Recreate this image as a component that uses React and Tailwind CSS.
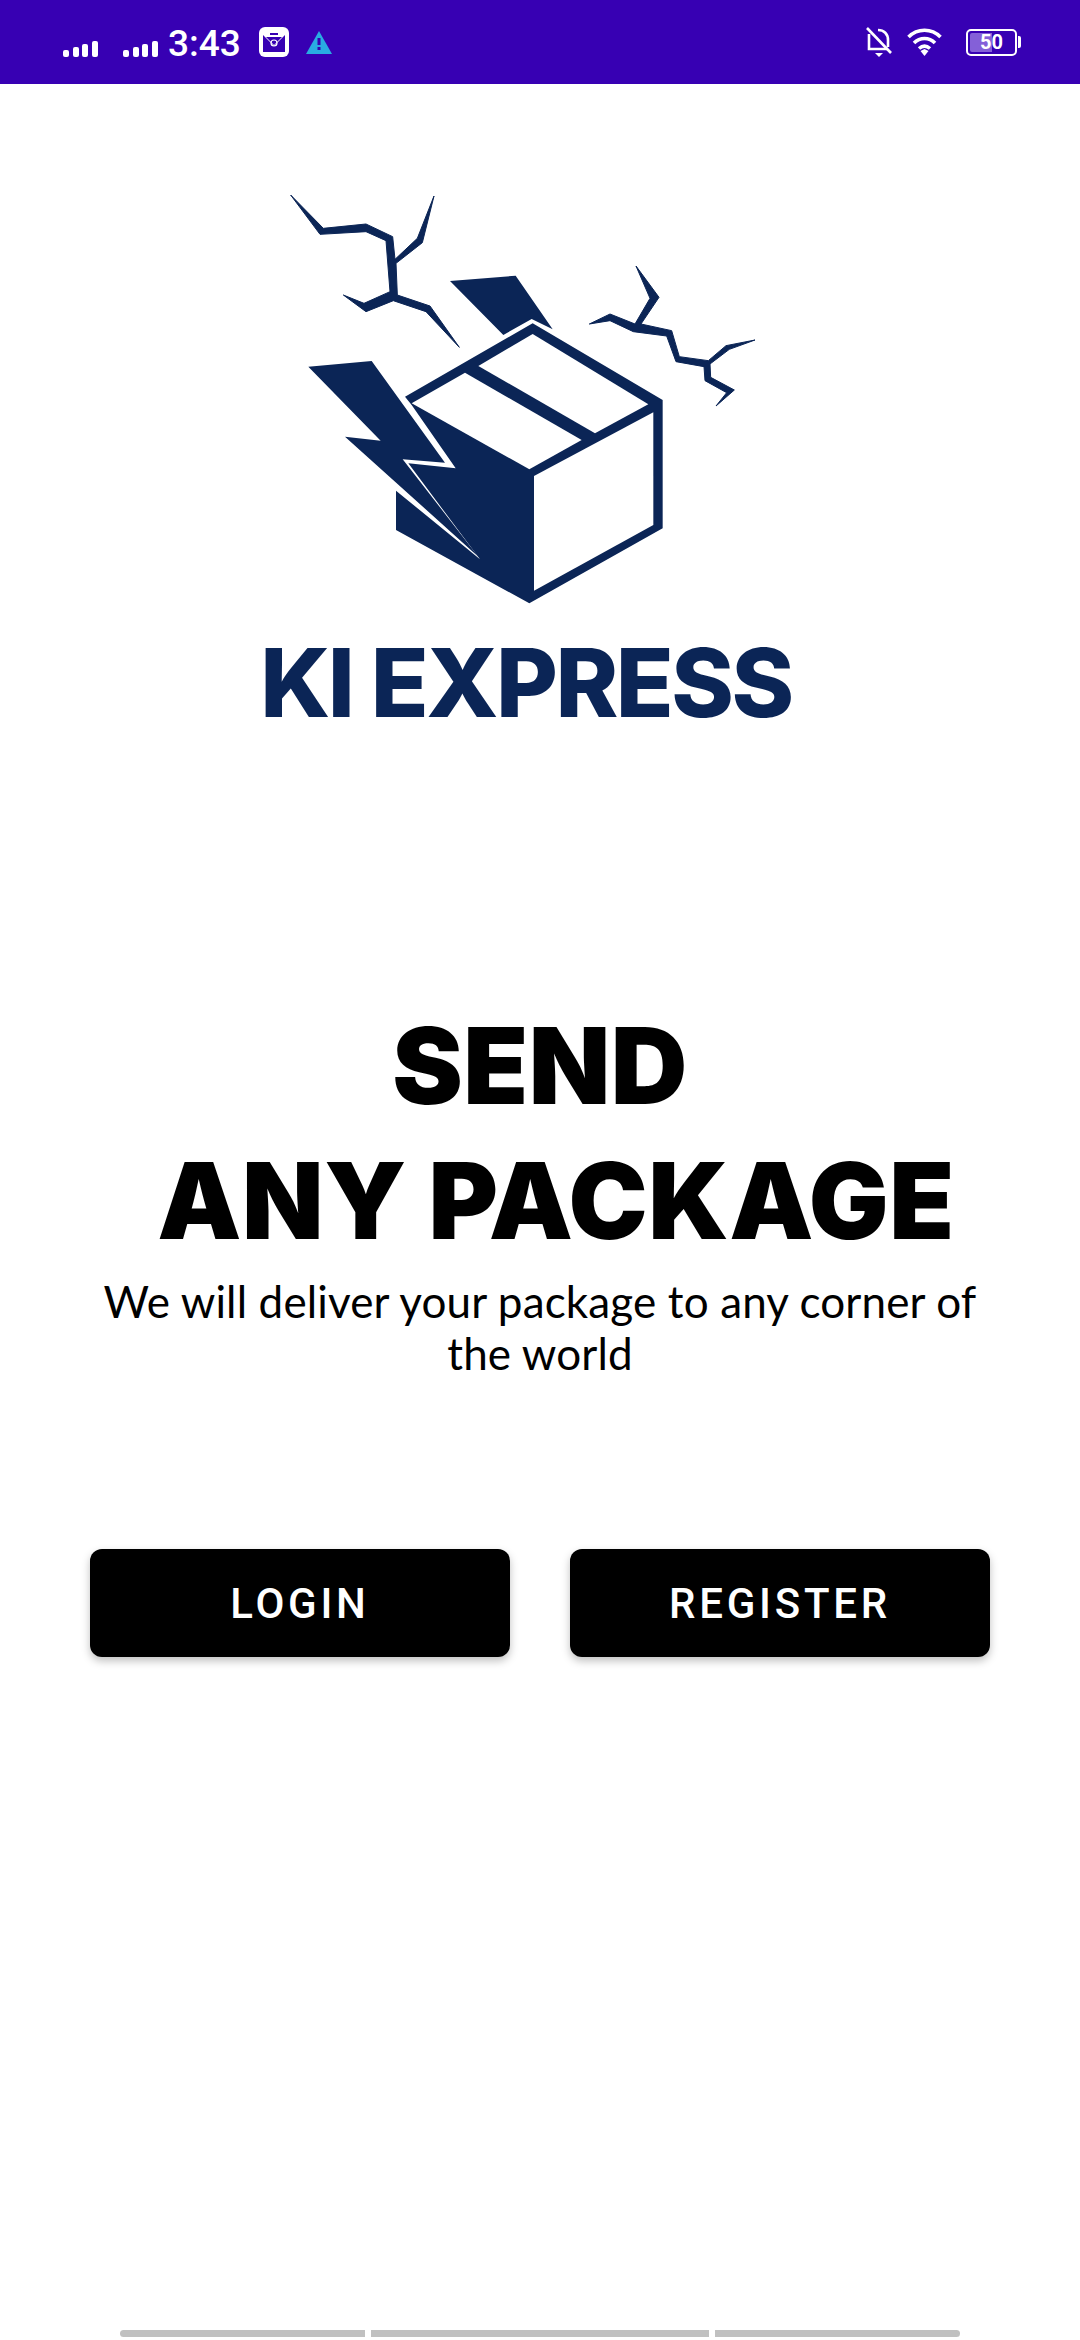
import React from "react";

const SignalBars = () => (
  <svg width="35" height="16" viewBox="0 0 35 16" fill="#fff">
    <rect x="0" y="9" width="6" height="7" rx="2" />
    <rect x="10" y="6" width="6" height="10" rx="2" />
    <rect x="19" y="3" width="6" height="13" rx="2" />
    <rect x="29" y="0" width="6" height="16" rx="2" />
  </svg>
);

const MailIcon = () => (
  <svg width="30" height="30" viewBox="0 0 30 30">
    <rect width="30" height="30" rx="6" fill="#fff" />
    <path d="M4 8h22v17H4z" fill="#3700b3" />
    <path d="M4 8h22l-11 11z" fill="#fff" />
    <path d="M7 10h16l-8 8z" fill="#3700b3" />
    <path d="M11 6h8v2h-8z" fill="#3700b3" />
    <circle cx="15" cy="16" r="3" fill="none" stroke="#fff" strokeWidth="1.2" />
  </svg>
);

const WarningIcon = () => (
  <svg width="26" height="23" viewBox="0 0 26 23">
    <path d="M13 0l13 23H0z" fill="#29abe2" />
    <rect x="11.5" y="7" width="3" height="7" fill="#3700b3" />
    <rect x="11.5" y="16" width="3" height="3" fill="#3700b3" />
  </svg>
);

const BellOffIcon = () => (
  <svg width="26" height="30" viewBox="0 0 26 30" fill="none" stroke="#fff" strokeWidth="2.6">
    <path d="M12 3c6 0 10 4 10 10v7" />
    <path d="M3 7v15h19" />
    <path d="M1 1l24 25" />
    <path d="M9 26h8l-4 4z" fill="#fff" stroke="none" />
  </svg>
);

const WifiIcon = () => (
  <svg width="35" height="28" viewBox="0 0 35 28" fill="none" stroke="#fff" strokeWidth="3.6">
    <path d="M1.5 9C10.500 0 24.500 0 33.500 9" />
    <path d="M7 15c6-6 15-6 21 0" />
    <path d="M12 20.500c3.500-3 7.500-3 11 0" />
    <path d="M13.500 23l4-2 4 2-4 5z" fill="#fff" stroke="none" />
  </svg>
);

const BatteryIcon = () => (
  <div className="flex items-center">
    <div className="relative h-[27px] w-[51px] rounded-[5px] border-[2px] border-white p-[2px]">
      <div className="h-full w-[22px] rounded-l-[2px] bg-[#8460d8]" />
      <span className="absolute inset-0 flex items-center justify-center text-[20px] font-bold leading-none text-white">50</span>
    </div>
    <div className="ml-[1px] h-[12px] w-[3px] rounded-r-[2px] bg-white" />
  </div>
);

const BoxLogo = () => (
  <svg width="520" height="460" viewBox="0 0 1560 1380" className="block">
    <g fill="#0b2556">
      {/* left crack */}
      <path stroke="#0b2556" strokeWidth="3" strokeLinejoin="round" d="M92 75L190 175 318 162 398 200 405 268 472 205 522 78 487 218 408 280 412 375 510 408 598 532 498 425 400 392 318 425 250 375 312 400 390 365 378 212 318 185 180 193Z" />
      {/* right crack */}
      <path stroke="#0b2556" strokeWidth="3" strokeLinejoin="round" d="M1128 288L1197 382 1143 462 1235 482 1258 560 1345 572 1398 527 1485 510 1408 538 1350 582 1352 622 1423 660 1368 708 1400 668 1335 632 1332 590 1248 575 1220 498 1120 485 1050 452 988 462 1050 432 1125 462 1170 385Z" />
      {/* flap */}
      <path d="M570 333L767 317 878 478 815 447 730 495Z" />
      {/* bolt */}
      <path d="M145 590L335 573 555 878 428 868 655 1160 255 800 362 812Z" />
      {/* box */}
      <path d="M435 680L818 460 1208 690 1208 1075 808 1300 408 1080 408 962 660 1168 445 880 587 895 455 705Z" />
    </g>
    <g fill="#fff">
      <path d="M455 700L615 608 965 810 808 898Z" />
      <path d="M655 588L818 492 1165 703 1005 790Z" />
      <path d="M822 918L1180 727 1180 1065 822 1262Z" />
    </g>
  </svg>
);

export default function App() {
  return (
    <div className="relative flex h-[2340px] w-[1080px] flex-col overflow-hidden bg-white">
      {/* status bar */}
      <div className="flex h-[84px] items-center bg-[#3700b3] pl-[63px] pr-[59px] font-['Roboto',sans-serif]">
        <div className="mt-[14px]"><SignalBars /></div>
        <div className="ml-[25px] mt-[14px]"><SignalBars /></div>
        <span className="ml-[10px] mt-[2px] text-[37px] font-medium leading-none text-white">3:43</span>
        <div className="ml-[18px]"><MailIcon /></div>
        <div className="ml-[17px]"><WarningIcon /></div>
        <div className="ml-auto"><BellOffIcon /></div>
        <div className="ml-[15px]"><WifiIcon /></div>
        <div className="ml-[24px]"><BatteryIcon /></div>
      </div>

      {/* logo */}
      <div className="flex flex-col items-center pt-[86px]">
        <div className="mr-[40px]"><BoxLogo /></div>
        <div className="mr-[28px] mt-[-3px] whitespace-nowrap font-['Inter',sans-serif] text-[95px] font-extrabold leading-[112px] tracking-[-2.5px] text-[#0b2556]">
          KI EXPRESS
        </div>
      </div>

      {/* headline */}
      <div className="mt-[259px] px-[100px] text-center text-black font-['Inter',sans-serif]">
        <h1 className="text-[106px] font-black leading-[135px] tracking-[0.5px]">
          SEND
          <br />
          <span className="inline-block pl-[32px]">ANY PACKAGE</span>
        </h1>
        <p className="mt-[7px] font-['Lato',sans-serif] text-[44px] font-normal leading-[52px] tracking-[0.15px]">
          We will deliver your package to any corner of the world
        </p>
      </div>

      {/* buttons */}
      <div className="mt-[170px] flex gap-[60px] px-[90px]">
        <button className="flex h-[108px] w-[420px] items-center justify-center rounded-[12px] bg-black font-['Roboto',sans-serif] text-[42px] font-medium tracking-[3.75px] text-white shadow-[0_4px_8px_rgba(0,0,0,0.25)]">
          LOGIN
        </button>
        <button className="flex h-[108px] w-[420px] items-center justify-center rounded-[12px] bg-black font-['Roboto',sans-serif] text-[42px] font-medium tracking-[3.75px] text-white shadow-[0_4px_8px_rgba(0,0,0,0.25)]">
          REGISTER
        </button>
      </div>

      {/* bottom scroll bars */}
      <div className="mb-[3px] mt-auto flex gap-[6px] px-[120px]">
        <div className="h-[7px] w-[245px] rounded-l-full bg-[#c0c0c0]" />
        <div className="h-[7px] w-[338px] bg-[#c0c0c0]" />
        <div className="h-[7px] w-[245px] rounded-r-full bg-[#c0c0c0]" />
      </div>
    </div>
  );
}
